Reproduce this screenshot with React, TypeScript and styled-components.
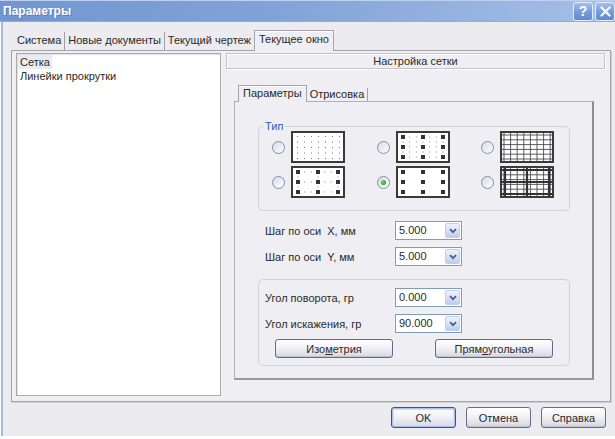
import React from 'react';
import styled, { createGlobalStyle } from 'styled-components';

const GlobalStyle = createGlobalStyle`
  html, body {
    margin: 0;
    padding: 0;
    background: #ffffff;
    overflow: hidden;
  }
  body {
    font-family: "Liberation Sans", Arial, sans-serif;
    font-size: 11px;
    color: #2a2a2a;
  }
`;

const Dialog = styled.div`
  width: 620px;
  height: 436px;
  display: flex;
  flex-direction: column;
`;

const TitleBar = styled.div`
  height: 22px;
  flex: none;
  display: flex;
  align-items: center;
  padding: 0 5px 0 3px;
  background: linear-gradient(90deg, #7196cf 0%, #82a3d8 45%, #a6c0e7 100%);
  box-shadow: inset 0 1px 0 #bed0ef, inset 0 -1px 0 #8fabdc;
`;

const Title = styled.div`
  flex: 1;
  color: #ffffff;
  font-weight: bold;
  font-size: 12px;
  text-shadow: 1px 1px 0 rgba(40, 60, 110, 0.3);
`;

const CaptionButtons = styled.div`
  display: flex;
  gap: 2px;
`;

const CaptionButton = styled.div`
  width: 20px;
  height: 19px;
  box-sizing: border-box;
  border: 1px solid #e4ecfa;
  border-radius: 3px;
  background: linear-gradient(180deg, #a2c0ee 0%, #739ad9 55%, #6189cf 100%);
  color: #ffffff;
  font-weight: bold;
  font-size: 14px;
  display: flex;
  align-items: center;
  justify-content: center;
`;

const Frame = styled.div`
  flex: 1;
  display: flex;
  flex-direction: column;
  margin-left: 1px;
  border-left: 2px solid #a3bbe4;
  background: #ecebf0;
  padding: 8px 14px 0 8px;
`;

const TabStrip = styled.div<{ $inner?: boolean }>`
  display: flex;
  align-items: flex-end;
  height: ${({ $inner }) => ($inner ? 16 : 20)}px;
  padding-left: ${({ $inner }) => ($inner ? 4 : 3)}px;
  margin: ${({ $inner }) => ($inner ? '16px 0 0 8px' : '0')};
`;

const Tab = styled.div<{ $active?: boolean; $inner?: boolean; $last?: boolean }>`
  position: relative;
  box-sizing: border-box;
  padding: 0 3px;
  height: ${({ $active, $inner }) => ($active ? ($inner ? 17 : 21) : $inner ? 13 : 18)}px;
  line-height: ${({ $active, $inner }) => ($active ? ($inner ? 15 : 17) : $inner ? 13 : 17)}px;
  border-right: ${({ $last }) => ($last ? 'none' : '1px solid #9f9ea4')};
  white-space: nowrap;
  ${({ $active }) =>
    $active &&
    `
    z-index: 1;
    margin-bottom: -1px;
    padding: 0 4px;
    background: #efeef3;
    border: 1px solid #a5a4aa;
    border-bottom: none;
    box-shadow: inset 0 1px 0 #ffffff;
  `}
`;

const Panel = styled.div`
  width: 600px;
  height: 352px;
  box-sizing: border-box;
  display: flex;
  gap: 5px;
  padding: 2px 5px 5px 4px;
  border: 1px solid #a5a4aa;
  background: #efeef3;
  box-shadow: 1px 1px 0 #cfced4;
`;

const List = styled.div`
  width: 205px;
  box-sizing: border-box;
  background: #ffffff;
  border: 1px solid #a9a9ae;
  box-shadow: inset 1px 1px 0 #e2e2e6;
  padding: 1px;
`;

const ListItem = styled.div<{ $selected?: boolean }>`
  height: 14px;
  line-height: 14px;
  span {
    display: inline-block;
    padding: 0 2px;
    background: ${({ $selected }) => ($selected ? '#ebebee' : 'transparent')};
  }
`;

const RightPane = styled.div`
  flex: 1;
  display: flex;
  flex-direction: column;
`;

const Header = styled.div`
  height: 16px;
  box-sizing: border-box;
  border: 1px solid #c4c3c9;
  box-shadow: inset 1px 1px 0 #ffffff, 1px 1px 0 #ffffff;
  text-align: center;
  line-height: 14px;
`;

const InnerPanel = styled.div`
  margin-left: 8px;
  width: 360px;
  height: 279px;
  box-sizing: border-box;
  border: 1px solid #b0afb5;
  border-right: 2px solid #8e8d93;
  border-bottom: 2px solid #9a999f;
  background: #efeef3;
  padding: 19px 0 0 23px;
`;

const TypeGroup = styled.fieldset`
  width: 312px;
  box-sizing: border-box;
  margin: 0;
  padding: 0 15px 12px 13px;
  border: 1px solid #d3d2d8;
  border-radius: 5px;
`;

const Legend = styled.legend`
  margin-left: -9px;
  padding: 0 2px;
  line-height: 10px;
  color: #2f5ac4;
`;

const Choices = styled.div`
  display: grid;
  grid-template-columns: repeat(3, max-content);
  justify-content: space-between;
  row-gap: 3px;
`;

const Choice = styled.div`
  display: flex;
  align-items: center;
  gap: 6px;
`;

const Radio = styled.span<{ $checked?: boolean }>`
  position: relative;
  width: 13px;
  height: 13px;
  box-sizing: border-box;
  border-radius: 50%;
  border: 1px solid #7890b2;
  background: linear-gradient(135deg, #d9d9e0 0%, #f4f4f6 70%, #ffffff 100%);
  ${({ $checked }) =>
    $checked &&
    `
    &::after {
      content: '';
      position: absolute;
      left: 3px;
      top: 3px;
      width: 5px;
      height: 5px;
      border-radius: 50%;
      background: radial-gradient(circle at 40% 40%, #7de07d 0%, #2fa52f 60%, #1d7d1d 100%);
    }
  `}
`;

const Fields = styled.div`
  display: flex;
  flex-direction: column;
  gap: 7px;
  margin-top: 10px;
  padding-left: 7px;
`;

const FieldRow = styled.div`
  display: flex;
  align-items: center;
  height: 19px;
`;

const FieldLabel = styled.div`
  width: 130px;
  white-space: pre;
`;

const Combo = styled.div`
  display: flex;
  width: 67px;
  height: 19px;
  box-sizing: border-box;
  border: 1px solid #7f9db9;
  background: #ffffff;
`;

const ComboValue = styled.div`
  flex: 1;
  padding-left: 3px;
  line-height: 17px;
`;

const ComboButton = styled.div`
  width: 15px;
  margin: 1px;
  box-sizing: border-box;
  border: 1px solid #c3cfe8;
  border-radius: 2px;
  background: linear-gradient(180deg, #eef2fc 0%, #d3def6 60%, #bccdef 100%);
  display: flex;
  align-items: center;
  justify-content: center;
`;

const AngleGroup = styled.div`
  width: 312px;
  box-sizing: border-box;
  margin-top: 13px;
  border: 1px solid #d3d2d8;
  border-radius: 5px;
  padding: 8px 0 7px 6px;
  display: flex;
  flex-direction: column;
  gap: 7px;
`;

const ButtonRow = styled.div`
  display: flex;
  gap: 42px;
  padding-left: 10px;
  margin-top: -1px;
`;

const PushButton = styled.button<{ $w: number; $h: number; $default?: boolean }>`
  width: ${({ $w }) => $w}px;
  height: ${({ $h }) => $h}px;
  box-sizing: border-box;
  padding: 0;
  font-family: "Liberation Sans", Arial, sans-serif;
  font-size: 11px;
  color: #2a2a2a;
  border: 1px solid ${({ $default }) => ($default ? '#34548f' : '#5f6d88')};
  border-radius: 3px;
  background: linear-gradient(180deg, #ffffff 0%, #f2f2f6 45%, #dcdce6 90%, #c9c9d6 100%);
  box-shadow: ${({ $default }) =>
    $default ? 'inset 0 0 0 1px #a9c1ee, inset 0 0 0 2px #cfdcf7' : 'inset 0 -1px 0 #c2c2cf'};
`;

const Footer = styled.div`
  display: flex;
  justify-content: flex-end;
  gap: 10px;
  padding-top: 5px;
`;

type PicKind = 'dots' | 'dotsMajor' | 'dotsAxes' | 'major' | 'lines' | 'linesMajor';

const GridPic = ({ kind }: { kind: PicKind }) => {
  const items: React.ReactNode[] = [];
  const majorX = [7, 27, 47];
  const majorY = [6, 16, 26];
  if (kind === 'dots') {
    for (let i = 0; i < 7; i++)
      for (let j = 0; j < 5; j++)
        items.push(<rect key={`d${i}-${j}`} x={6 + i * 7} y={5 + j * 5.5} width={1} height={1} fill="#7a7a7a" />);
  }
  if (kind === 'dotsMajor' || kind === 'dotsAxes') {
    for (let i = 0; i < 7; i++)
      for (let j = 0; j < 5; j++) {
        const x = 7 + i * (20 / 3);
        const y = 6 + j * 5;
        const onMajor = i % 3 === 0 && j % 2 === 0;
        if (onMajor) continue;
        if (kind === 'dotsAxes' && i % 3 !== 0 && j % 2 !== 0) continue;
        items.push(<rect key={`s${i}-${j}`} x={x - 0.5} y={y - 0.5} width={1} height={1} fill="#8a8a8a" />);
      }
  }
  if (kind === 'dotsMajor' || kind === 'dotsAxes' || kind === 'major') {
    majorX.forEach((x) =>
      majorY.forEach((y) =>
        items.push(<rect key={`m${x}-${y}`} x={x - 2} y={y - 2} width={4} height={4} fill="#333333" />)
      )
    );
  }
  if (kind === 'lines' || kind === 'linesMajor') {
    for (let i = 0; i < 8; i++)
      items.push(<line key={`v${i}`} x1={4 + i * 6.6} y1={2} x2={4 + i * 6.6} y2={30} stroke="#4a4a4a" strokeWidth={0.9} />);
    for (let j = 0; j < 6; j++)
      items.push(<line key={`h${j}`} x1={2} y1={4 + j * 4.8} x2={52} y2={4 + j * 4.8} stroke="#4a4a4a" strokeWidth={0.9} />);
  }
  if (kind === 'linesMajor') {
    [5, 27, 49].forEach((x) =>
      items.push(<line key={`V${x}`} x1={x} y1={2} x2={x} y2={30} stroke="#333333" strokeWidth={2.2} />)
    );
    [4, 16, 28].forEach((y) =>
      items.push(<line key={`H${y}`} x1={2} y1={y} x2={52} y2={y} stroke="#333333" strokeWidth={2.2} />)
    );
  }
  return (
    <svg width={54} height={32} viewBox="0 0 54 32" style={{ display: 'block' }}>
      <rect x={0} y={0} width={54} height={32} fill="#ffffff" />
      {items}
      <rect x={1} y={1} width={52} height={30} fill="none" stroke="#3a3a3a" strokeWidth={2} />
    </svg>
  );
};

const Chevron = () => (
  <svg width={8} height={6} viewBox="0 0 8 6">
    <path d="M1 1.2 L4 4.2 L7 1.2" fill="none" stroke="#4d5f86" strokeWidth={1.8} />
  </svg>
);

const CloseGlyph = () => (
  <svg width={11} height={11} viewBox="0 0 11 11">
    <path d="M1.5 1.5 L9.5 9.5 M9.5 1.5 L1.5 9.5" stroke="#ffffff" strokeWidth={2.2} strokeLinecap="round" />
  </svg>
);

const ComboField = ({ label, value }: { label: string; value: string }) => (
  <FieldRow>
    <FieldLabel>{label}</FieldLabel>
    <Combo>
      <ComboValue>{value}</ComboValue>
      <ComboButton>
        <Chevron />
      </ComboButton>
    </Combo>
  </FieldRow>
);

const choices: { kind: PicKind; checked?: boolean }[] = [
  { kind: 'dots' },
  { kind: 'dotsMajor' },
  { kind: 'lines' },
  { kind: 'dotsAxes' },
  { kind: 'major', checked: true },
  { kind: 'linesMajor' },
];

const App = () => {
  return (
    <>
      <GlobalStyle />
      <Dialog>
        <TitleBar>
          <Title>Параметры</Title>
          <CaptionButtons>
            <CaptionButton>?</CaptionButton>
            <CaptionButton>
              <CloseGlyph />
            </CaptionButton>
          </CaptionButtons>
        </TitleBar>
        <Frame>
          <TabStrip>
            <Tab>Система</Tab>
            <Tab>Новые документы</Tab>
            <Tab $last>Текущий чертеж</Tab>
            <Tab $active>Текущее окно</Tab>
          </TabStrip>
          <Panel>
            <List>
              <ListItem $selected>
                <span>Сетка</span>
              </ListItem>
              <ListItem>
                <span>Линейки прокрутки</span>
              </ListItem>
            </List>
            <RightPane>
              <Header>Настройка сетки</Header>
              <TabStrip $inner>
                <Tab $inner $active>
                  Параметры
                </Tab>
                <Tab $inner>Отрисовка</Tab>
              </TabStrip>
              <InnerPanel>
                <TypeGroup>
                  <Legend>Тип</Legend>
                  <Choices>
                    {choices.map((c) => (
                      <Choice key={c.kind}>
                        <Radio $checked={c.checked} />
                        <GridPic kind={c.kind} />
                      </Choice>
                    ))}
                  </Choices>
                </TypeGroup>
                <Fields>
                  <ComboField label="Шаг по оси  X, мм" value="5.000" />
                  <ComboField label="Шаг по оси  Y, мм" value="5.000" />
                </Fields>
                <AngleGroup>
                  <ComboField label="Угол поворота, гр" value="0.000" />
                  <ComboField label="Угол искажения, гр" value="90.000" />
                  <ButtonRow>
                    <PushButton $w={118} $h={19}>
                      Изо<u>м</u>етрия
                    </PushButton>
                    <PushButton $w={118} $h={19}>
                      Прям<u>о</u>угольная
                    </PushButton>
                  </ButtonRow>
                </AngleGroup>
              </InnerPanel>
            </RightPane>
          </Panel>
          <Footer>
            <PushButton $w={65} $h={21} $default>
              OK
            </PushButton>
            <PushButton $w={65} $h={21}>
              Отмена
            </PushButton>
            <PushButton $w={65} $h={21}>
              Справка
            </PushButton>
          </Footer>
        </Frame>
      </Dialog>
    </>
  );
};

export default App;
